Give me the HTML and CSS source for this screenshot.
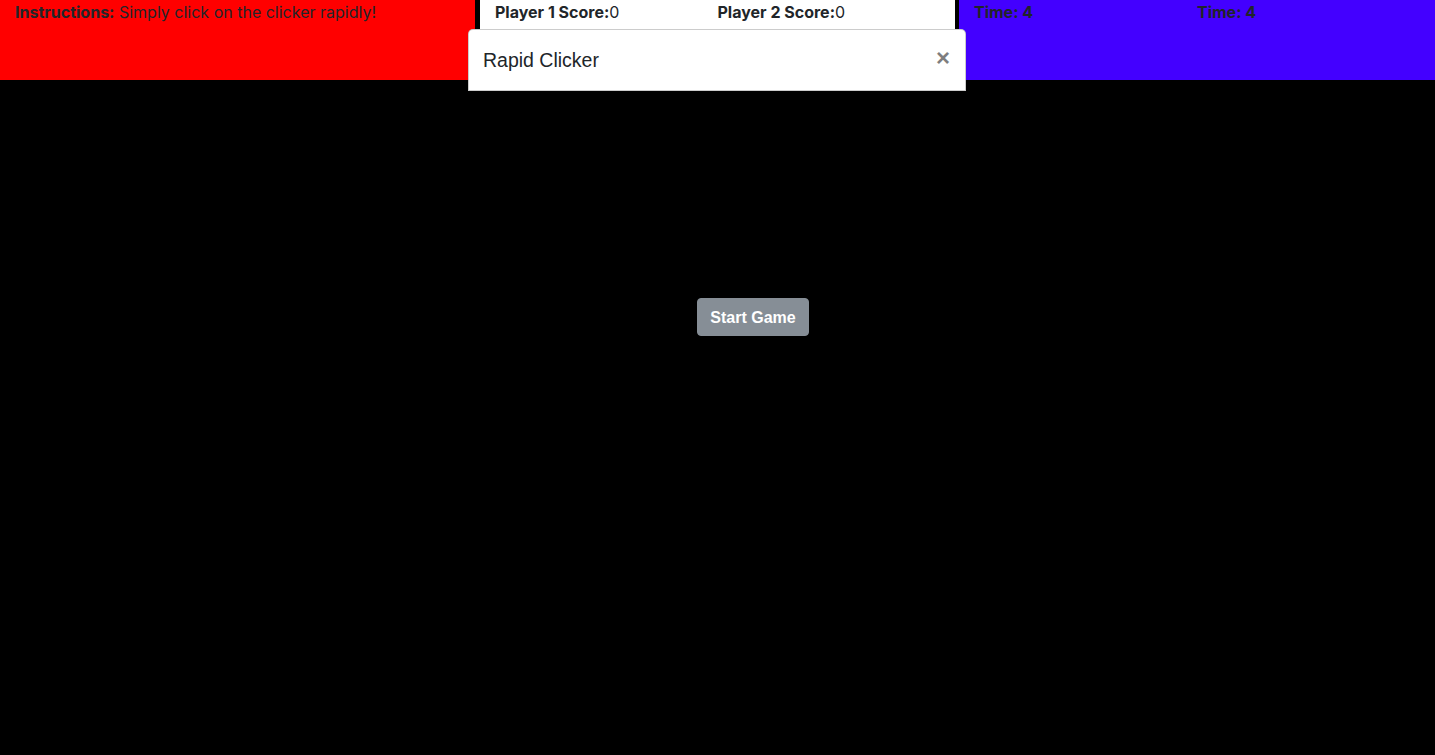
FILE: index.html
```html
<!DOCTYPE html>
<html lang="en">
<head>
<meta charset="utf-8">
<title>Rapid Clicker</title>
<link rel="stylesheet" href="styles.css">
</head>
<body>
  <header class="topbar">
    <div class="panel panel-red">
      <div class="panel-inner">
        <div><b>Instructions:</b> Simply click on the clicker rapidly!</div>
      </div>
    </div>
    <div class="panel panel-white">
      <div class="panel-inner halves">
        <div><b>Player 1 Score:</b>0</div>
        <div><b>Player 2 Score:</b>0</div>
      </div>
    </div>
    <div class="panel panel-blue">
      <div class="panel-inner halves">
        <div><b>Time: 4</b></div>
        <div><b>Time: 4</b></div>
      </div>
    </div>
  </header>

  <main class="stage">
    <button class="btn-start" type="button">Start Game</button>
  </main>

  <div class="modal">
    <div class="modal-header">
      <h5 class="modal-title">Rapid Clicker</h5>
      <button class="close" type="button" aria-label="Close">&times;</button>
    </div>
  </div>
</body>
</html>
```

FILE: styles.css
```css
html, body {
  margin: 0;
  padding: 0;
}
body {
  background: #000;
  font-family: "Liberation Sans", Arial, "Helvetica Neue", sans-serif;
  font-size: 16px;
  line-height: 24px;
  color: #212529;
  width: 1435px;
  height: 755px;
  overflow: hidden;
}
.topbar {
  display: grid;
  grid-template-columns: 475px 480px 480px;
  height: 80px;
  font-family: Inter, "Liberation Sans", Arial, sans-serif;
}
.panel {
  height: 80px;
}
.panel-red { background: #ff0000; }
.panel-white { background: #fff; margin-left: 5px; }
.panel-blue { background: #4300ff; margin-left: 4px; }
.panel-inner {
  padding: 0 15px;
}
.halves {
  display: grid;
  grid-template-columns: 1fr 1fr;
}
b { font-weight: 700; }

.stage {
  padding-top: 218px;
  padding-left: 71px;
  text-align: center;
}
.btn-start {
  background: #868e96;
  color: #fff;
  border: 1px solid #868e96;
  border-radius: 4px;
  font-family: inherit;
  font-size: 16px;
  line-height: 24px;
  padding: 7px 12px 5px;
  width: 112px;
  height: 38px;
  font-weight: 700;
}

.modal {
  position: absolute;
  left: 468px;
  top: 29px;
  width: 498px;
  box-sizing: border-box;
  background: #fff;
  border: 1px solid rgba(0,0,0,.2);
  border-radius: 5px 5px 0 0;
}
.modal-header {
  display: flex;
  align-items: center;
  padding: 15px 15px 15px 14px;
  height: 60px;
  box-sizing: border-box;
}
.modal-title {
  margin: 0;
  font-size: 19.5px;
  line-height: 30px;
  font-weight: 400;
  color: #212529;
}
.close {
  margin-left: auto;
  background: none;
  border: 0;
  padding: 0 0 5px;
  font-family: inherit;
  font-size: 24px;
  font-weight: 700;
  line-height: 1;
  color: #000;
  opacity: .5;
}
```
